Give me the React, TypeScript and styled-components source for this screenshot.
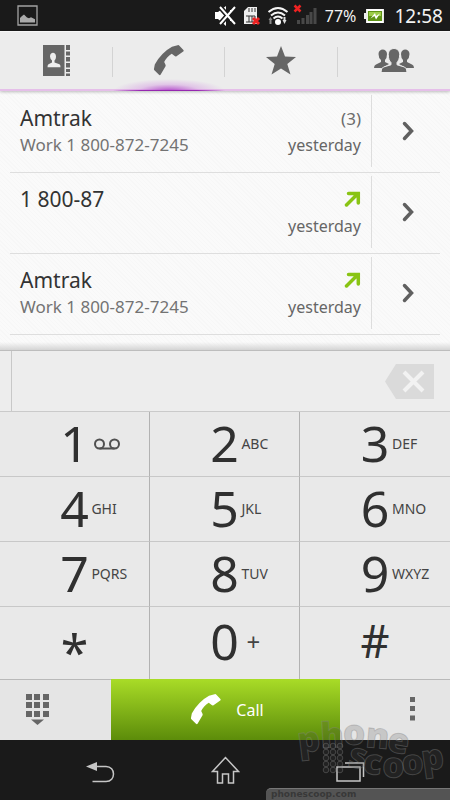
import React from "react";
import styled, { createGlobalStyle } from "styled-components";

const GlobalStyle = createGlobalStyle`
  * { box-sizing: border-box; }
  body { margin: 0; background: #1a1a1a; }
  button, input { font: inherit; color: inherit; margin: 0; padding: 0; border: 0; background: none; border-radius: 0; }
  button { cursor: pointer; }
  svg { display: block; flex: none; }
`;

const Screen = styled.div`
  position: relative;
  min-height: 100vh;
  display: flex;
  flex-direction: column;
  overflow: hidden;
  background: #fafafa;
  color: #333;
  font-family: "Noto Sans", "Open Sans", sans-serif;
`;

const StatusBar = styled.header`
  display: flex;
  align-items: center;
  justify-content: space-between;
  height: 31px;
  padding: 0 7px 0 17px;
  background: #1a1a1a;
  color: #f2f2f2;
`;

const StatusGroup = styled.div`
  display: flex;
  align-items: center;
  gap: 8px;
`;

const Battery = styled.span`
  font-size: 16px;
  line-height: 32px;
`;

const Clock = styled.time`
  padding-left: 2px;
  font-size: 19px;
  line-height: 32px;
`;

const Tabs = styled.nav`
  display: grid;
  grid-template-columns: repeat(4, 1fr);
  height: 60px;
  background: #ececec;
  border-top: 1px solid #f6f6f6;
  border-bottom: 2px solid #e5bfe9;
  box-shadow: 0 1px 3px rgba(0, 0, 0, 0.25);
  z-index: 1;
`;

const Tab = styled.button<{ $active?: boolean }>`
  display: flex;
  align-items: center;
  justify-content: center;
  position: relative;
  color: #666;
  margin-bottom: -2px;
  border-bottom: 2px solid transparent;
  background: ${(p) =>
    p.$active
      ? "linear-gradient(90deg, transparent, #9527b0 25%, #9527b0 75%, transparent) bottom / 100% 1px no-repeat border-box, radial-gradient(ellipse 50% 12px at 50% 100%, #b34fcb, rgba(200, 110, 220, 0.3) 55%, transparent) border-box"
      : "none"};

  &:not(:first-child)::before {
    content: "";
    position: absolute;
    left: -1px;
    top: 15px;
    width: 1px;
    height: 30px;
    background: #d3d3d3;
  }
`;

const CallLog = styled.ul`
  flex: 1 0 auto;
  margin: 0;
  padding: 1px 10px 15px;
  list-style: none;
  background:
    linear-gradient(0deg, #d4d4d4, rgba(240, 240, 240, 0) 8px),
    repeating-linear-gradient(45deg, #fafafa 0 2px, #f7f7f7 2px 3px);
`;

const LogRow = styled.li`
  display: grid;
  grid-template-columns: 1fr auto 69px;
  border-bottom: 1px solid #dedede;
`;

const EntryText = styled.div<{ $end?: boolean }>`
  display: flex;
  flex-direction: column;
  align-items: ${(p) => (p.$end ? "flex-end" : "flex-start")};
  padding: ${(p) => (p.$end ? "12px 10px 14px 0" : "12px 0 14px 10px")};
`;

const Name = styled.span`
  font-size: 21px;
  line-height: 28px;
`;

const Detail = styled.span`
  font-size: 17px;
  line-height: 26px;
  color: #737373;
`;

const Mark = styled.span`
  display: flex;
  align-items: center;
  height: 28px;
  font-size: 17px;
  color: #6c6c6c;
`;

const When = styled.time`
  font-size: 16px;
  line-height: 26px;
  color: #666;
`;

const OpenButton = styled.button`
  display: flex;
  align-items: center;
  justify-content: center;
  margin: 3px 0 5px;
  padding-left: 3px;
  border-left: 1px solid #ddd;
  color: #606060;
`;

const NumberBar = styled.div`
  display: flex;
  align-items: center;
  border-top: 1px solid #bdbdbd;
  border-bottom: 1px solid #cacaca;
  background: #ededed;
`;

const NumberInput = styled.input`
  flex: 1;
  min-width: 0;
  height: 60px;
  margin-left: 11px;
  padding: 0 12px;
  border-left: 1px solid #c8c8c8;
  font-size: 28px;
  outline: none;
`;

const Erase = styled.button`
  margin-right: 16px;
`;

const Keypad = styled.div`
  display: grid;
  grid-template-columns: repeat(3, 1fr);
  background: #e9e9e9;
`;

const Key = styled.button<{ $last?: boolean }>`
  display: grid;
  grid-template-columns: 2fr 1fr 2fr;
  align-items: center;
  height: ${(p) => (p.$last ? 72 : 65)}px;
  padding-bottom: ${(p) => (p.$last ? 4 : 2)}px;
  border-bottom: ${(p) => (p.$last ? "0" : "1px solid #c8c8c8")};
  border-right: 1px solid #b2b2b2;

  &:nth-child(3n) {
    border-right: 0;
  }
`;

const Digit = styled.span<{ $star?: boolean; $hash?: boolean }>`
  grid-column: 2;
  display: flex;
  justify-content: center;
  padding-top: ${(p) => (p.$star ? 14 : 0)}px;
  font-size: ${(p) => (p.$hash ? 45 : 50)}px;
  line-height: 62px;
  color: #303030;
`;

const Letters = styled.span<{ $plus?: boolean }>`
  padding-left: ${(p) => (p.$plus ? 7 : 2)}px;
  padding-top: 2px;
  font-size: ${(p) => (p.$plus ? 24 : 14)}px;
  line-height: 24px;
  text-align: left;
  color: #444;
`;

const VoicemailSlot = styled.span`
  display: block;
  padding-left: 3px;
`;

const ActionBar = styled.div`
  display: grid;
  grid-template-columns: 111fr 229fr 110fr;
  height: 61px;
  border-top: 1px solid #b9b9b9;
  background: #e5e5e5;
`;

const Action = styled.button<{ $menu?: boolean }>`
  display: flex;
  align-items: center;
  justify-content: center;
  padding-left: ${(p) => (p.$menu ? 34 : 0)}px;
  padding-right: ${(p) => (p.$menu ? 0 : 37)}px;
  padding-bottom: 2px;
  color: #666;
`;

const CallButton = styled.button`
  display: flex;
  align-items: center;
  justify-content: center;
  gap: 14px;
  margin-top: -1px;
  padding-left: 3px;
  font-size: 16px;
  color: #fff;
  background: linear-gradient(#a9dc27, #5c8c0a);
`;

const SystemNav = styled.nav`
  display: grid;
  grid-template-columns: 77fr 46fr 77fr;
  height: 60px;
  background: #1a1a1a;
  color: #c6c6c6;
`;

const NavButton = styled.button<{ $side?: "left" | "right" }>`
  display: flex;
  align-items: center;
  justify-content: center;
  padding: ${(p) => (p.$side === "left" ? "4px 0 0 28px" : p.$side === "right" ? "4px 26px 0 0" : "0")};
`;

const Watermark = styled.div`
  position: absolute;
  right: 0;
  bottom: 0;
  width: 184px;
  pointer-events: none;
`;

const WatermarkCaption = styled.div`
  height: 12px;
  padding-left: 5px;
  border-top-left-radius: 5px;
  border-top: 1px solid #777;
  background: rgba(95, 95, 95, 0.85);
  font: bold 9px/11px "DejaVu Sans", sans-serif;
  color: #383838;
`;

const Handset = ({ color }: { color: string }) => (
  <svg width="32" height="31" viewBox="-1 0 32 31" fill={color} aria-hidden="true">
    <path d="M18 1.800 23.600.2q1-.4 1.800.5l4 4.300q.6.800-.2 1.600l-6.700 4.600q-1 .5-1.800-.2l-3-2.300Q12.500 12 10.200 17l1.300 2.700q.4.900-.1 1.700l-4.700 8.200q-.8 1-1.700.2L.4 25.200q-.6-.6-.4-1.500l.8-4.200Q4 13.500 8.500 9T18 1.800Z" />
  </svg>
);

const AddressBook = () => (
  <svg width="27" height="31" viewBox="0 0 27 31" fill="currentColor" aria-hidden="true">
    <path d="M0 0h21.500v31H0z" />
    <path d="M23 0h4v5h-4zM23 6.500h4v4h-4zM23 12h4v4.500h-4zM23 18h4v4.500h-4zM23 24h4v3h-4zM23 28.500h4V31h-4z" />
    <path fill="#eee" d="M7 11.500c0-5 6-5 6 0 0 2-.6 3-1.500 4v2l5 1.700q1 .5 1 3h-13q0-2.500 1-3l3.500-1.700v-2Q7 13.500 7 11.500Z" />
  </svg>
);

const Star = () => (
  <svg width="30" height="29" viewBox="0 0 30 29" fill="currentColor" aria-hidden="true">
    <path d="m15 0 4 10.500 11 .5-8.700 7L24.500 28.500 15 22.500 5.500 28.500 8.700 18 0 11l11-.5z" />
  </svg>
);

const People = () => (
  <svg width="40" height="25" viewBox="0 0 40 25" fill="currentColor" aria-hidden="true">
    <path d="M4.500 6C4.500 0 13 0 13 6q0 4-2 6v2l4 2-7 4H0q0-3 2-3.500L7 14v-2Q4.500 10 4.500 6ZM35.500 6C35.500 0 27 0 27 6q0 4 2 6v2l-4 2 7 4h8q0-3-2-3.500L33 14v-2q2.500-2 2.500-6Z" />
    <path stroke="#ececec" d="M14.300 6.500c0-8 11.400-8 11.400 0 0 4-1.400 6.500-2.700 8v2.300l7.500 2.200q2.500 1 2.500 5.500H7Q7 20 9.500 19l7.500-2.200v-2.300c-1.700-1.500-2.700-4-2.700-8Z" />
  </svg>
);

const PictureIcon = () => (
  <svg width="21" height="21" viewBox="0 0 21 21" aria-label="Picture notification">
    <path d="M1 1h19v19H1z" fill="none" stroke="#a3a3a3" strokeWidth="1.300" />
    <path d="M3 17.500V13l2-2 2-1.500 3 3 2 .8 2-1 4 2v3.200z" fill="#aaa" />
  </svg>
);

const StatusIcons = () => (
  <svg width="102" height="26" viewBox="218 3 102 26" fill="none" aria-label="Muted, no SIM, Wi-Fi, no signal">
    <path fill="#fff" d="M218 12h3l8-6v20l-8-7h-3z" />
    <path stroke="#1a1a1a" strokeWidth="5" d="m223 7 15 17m0-17-15 17" />
    <path stroke="#fff" strokeWidth="2" d="m223 7 15 17m0-17-15 17M234 10v1m0 8v2" />
    <path fill="#eee" d="M247 11l4-4h9v17h-13z" />
    <path stroke="#333" d="M252 8v4m3-4v4m3-4v4M249 16h9v6h-9m3-6v6m3-6v6" />
    <path stroke="#e22" strokeWidth="3" d="m256 18 6 6m0-6-6 6" />
    <path stroke="#f4f4f4" strokeWidth="2" d="M271.500 12q9.500-8 19 0M274 15.500q7-6 14 0M276.500 18.500q4.500-4 9 0" />
    <circle cx="281" cy="22" r="3" fill="#fff" />
    <path fill="#888" d="m271.500 20 2-3 2 3h-1v4h-2v-4z" />
    <path fill="#ddd" d="m285.500 20 2 4 2-4h-1v-3h-2v3z" />
    <path fill="#484848" d="M300 20h3v4h-3zM304.500 18h3v6h-3zM309 15h3v9h-3zM312.500 12h3v12h-3zM316.500 8h3v16h-3z" />
    <path stroke="#e22" strokeWidth="2.500" d="m297.500 5.500 6 6m0-6-6 6" />
  </svg>
);

const BatteryIcon = () => (
  <svg width="20" height="14" viewBox="0 0 20 14" aria-label="Charging">
    <path d="M0 4h2v6H0z" fill="#eee" />
    <path d="M3 1h16v12H3z" fill="#5f9417" stroke="#fff" strokeWidth="1.800" />
    <path d="M5 3h12v4H5z" fill="#9ccb4a" />
    <path d="m6.500 9.500 4.500-5.500 1 3 4-2.500-4 6-1.500-3.500z" fill="#fff" />
  </svg>
);

const Chevron = () => (
  <svg width="12" height="20" viewBox="0 0 12 20" fill="none" stroke="currentColor" strokeWidth="3.500" aria-hidden="true">
    <path strokeLinecap="round" d="m2.500 2.500 7 7.500-7 7.500" />
  </svg>
);

const OutgoingArrow = () => (
  <svg width="17" height="16" viewBox="0 0 17 16" fill="none" stroke="#89c414" strokeWidth="3.500" aria-label="Outgoing call">
    <path strokeLinecap="round" strokeLinejoin="miter" d="M4.500 2.500h9.800v9.500M2.500 14l11-11" />
  </svg>
);

const EraseIcon = () => (
  <svg width="49" height="35" viewBox="0 0 49 35" aria-hidden="true">
    <path d="M11 0h38v35H11L0 17.500z" fill="#dadada" />
    <path d="m19 8 19 19m0-19-19 19" stroke="#f2f2f2" strokeWidth="4" />
  </svg>
);

const Voicemail = () => (
  <svg width="26" height="12" viewBox="0 0 26 12" fill="none" stroke="#505050" strokeWidth="2" aria-label="voicemail">
    <circle cx="5.500" cy="6" r="4.500" />
    <circle cx="20.500" cy="6" r="4.500" />
    <path d="M5.500 10.500h15" />
  </svg>
);

const HideKeypad = () => (
  <svg width="23" height="31" viewBox="0 0 23 31" fill="currentColor" aria-hidden="true">
    {[0, 8, 17].map((y) => [0, 8, 17].map((x) => <rect key={`${x}-${y}`} x={x} y={y} width="6" height="6" />))}
    <path d="M5 25.500h13L11.500 31z" />
  </svg>
);

const MoreIcon = () => (
  <svg width="5" height="24" viewBox="0 0 5 24" fill="currentColor" aria-hidden="true">
    <path d="M0 0h5v5H0zM0 9h5v5H0zM0 18.500h5v5H0z" />
  </svg>
);

const BackIcon = () => (
  <svg width="29" height="21" viewBox="0 0 29 21" aria-hidden="true">
    <path d="M10 4.500h10c10 0 10 15 0 15H6.500" fill="none" stroke="currentColor" strokeWidth="1.500" />
    <path d="m0 4.500 11-4.500v9z" fill="currentColor" />
  </svg>
);

const HomeIcon = () => (
  <svg width="29" height="28" viewBox="0 0 29 28" fill="none" stroke="currentColor" strokeWidth="1.500" aria-hidden="true">
    <path d="M14.500 1.500 1.500 15.500h5V27h5v-9h6v9h5V15.500h5z" />
  </svg>
);

const RecentIcon = () => (
  <svg width="29" height="20" viewBox="0 0 29 20" fill="none" stroke="currentColor" strokeWidth="1.500" aria-hidden="true">
    <path d="M1 5h23v14H1zM9 1h18.500v14" />
  </svg>
);

const BrandMark = () => (
  <svg
    width="184"
    height="98"
    viewBox="266 690 184 98"
    fill="rgba(70,70,70,.2)"
    stroke="rgba(135,135,135,.38)"
    fontFamily="Open Sans, sans-serif"
    fontWeight="800"
    fontSize="35"
    aria-hidden="true"
  >
    <text x="299 321 343 365 386" y="753 748 745 747 751" rotate="-7 -3 0 5 10">phone</text>
    <text x="347 362 382 402 423" y="766 773 777 775 771" rotate="12 7 2 -3 -8">scoop</text>
    {[746, 752, 758, 764, 770].map((y) => [326, 333, 340].map((x) => <circle key={`${x}-${y}`} cx={x} cy={y} r="2.800" />))}
  </svg>
);

const calls = [
  { name: "Amtrak", detail: "Work 1 800-872-7245", count: 3 },
  { name: "1 800-87" },
  { name: "Amtrak", detail: "Work 1 800-872-7245" },
];

const keys = [
  ["1", ""], ["2", "ABC"], ["3", "DEF"],
  ["4", "GHI"], ["5", "JKL"], ["6", "MNO"],
  ["7", "PQRS"], ["8", "TUV"], ["9", "WXYZ"],
  ["*", ""], ["0", "+"], ["#", ""],
];

export default function App() {
  return (
    <Screen>
      <GlobalStyle />
      <StatusBar>
        <PictureIcon />
        <StatusGroup>
          <StatusIcons />
          <Battery>77%</Battery>
          <BatteryIcon />
          <Clock>12:58</Clock>
        </StatusGroup>
      </StatusBar>
      <Tabs>
        <Tab aria-label="Contacts"><AddressBook /></Tab>
        <Tab aria-label="Phone" $active><Handset color="#666" /></Tab>
        <Tab aria-label="Favourites"><Star /></Tab>
        <Tab aria-label="Groups"><People /></Tab>
      </Tabs>
      <CallLog>
        {calls.map((call, i) => (
          <LogRow key={i}>
            <EntryText>
              <Name>{call.name}</Name>
              {call.detail && <Detail>{call.detail}</Detail>}
            </EntryText>
            <EntryText $end>
              <Mark>{call.count ? `(${call.count})` : <OutgoingArrow />}</Mark>
              <When>yesterday</When>
            </EntryText>
            <OpenButton aria-label={`Details for ${call.name}`}><Chevron /></OpenButton>
          </LogRow>
        ))}
      </CallLog>
      <NumberBar>
        <NumberInput type="tel" aria-label="Phone number" />
        <Erase aria-label="Erase"><EraseIcon /></Erase>
      </NumberBar>
      <Keypad>
        {keys.map(([digit, letters], i) => (
          <Key key={digit} $last={i > 8}>
            <Digit $star={digit === "*"} $hash={digit === "#"}>{digit}</Digit>
            <Letters $plus={letters === "+"}>{digit === "1" ? <VoicemailSlot><Voicemail /></VoicemailSlot> : letters}</Letters>
          </Key>
        ))}
      </Keypad>
      <ActionBar>
        <Action aria-label="Hide keypad"><HideKeypad /></Action>
        <CallButton><Handset color="#fff" />Call</CallButton>
        <Action aria-label="More options" $menu><MoreIcon /></Action>
      </ActionBar>
      <SystemNav>
        <NavButton aria-label="Back" $side="left"><BackIcon /></NavButton>
        <NavButton aria-label="Home"><HomeIcon /></NavButton>
        <NavButton aria-label="Recent apps" $side="right"><RecentIcon /></NavButton>
      </SystemNav>
      <Watermark>
        <BrandMark />
        <WatermarkCaption>phonescoop.com</WatermarkCaption>
      </Watermark>
    </Screen>
  );
}
